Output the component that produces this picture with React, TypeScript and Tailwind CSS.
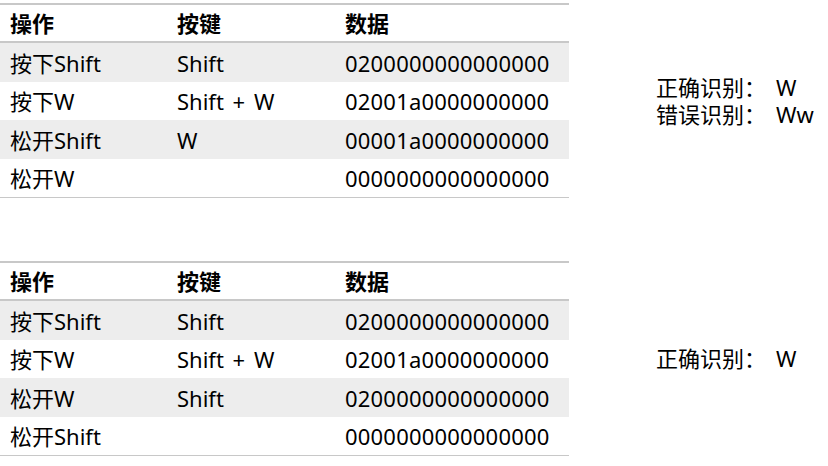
import React from "react";

type Row = [string, string, string];

const tableA: Row[] = [
  ["按下Shift", "Shift", "0200000000000000"],
  ["按下W", "Shift + W", "02001a0000000000"],
  ["松开Shift", "W", "00001a0000000000"],
  ["松开W", "", "0000000000000000"],
];

const tableB: Row[] = [
  ["按下Shift", "Shift", "0200000000000000"],
  ["按下W", "Shift + W", "02001a0000000000"],
  ["松开W", "Shift", "0200000000000000"],
  ["松开Shift", "", "0000000000000000"],
];

const KeyTable = ({ rows }: { rows: Row[] }) => {
  return (
    <div className="w-[569px] border-t-2 border-b border-[#c8c8c8]">
      {/* Header */}
      <div className="grid grid-cols-[167px_168px_234px] h-[38px] items-center border-b-2 border-[#c8c8c8] font-bold">
        <div className="pl-[10px]">操作</div>
        <div className="pl-[10px]">按键</div>
        <div className="pl-[10px]">数据</div>
      </div>
      {rows.map((r, i) => (
        <div
          key={i}
          className={`grid grid-cols-[167px_168px_234px] items-center ${
            i % 2 === 0 ? "bg-[#ededed] h-[39px]" : "bg-white h-[38px]"
          }`}
        >
          <div className="pl-[10px]">{r[0]}</div>
          <div className="pl-[10px] [word-spacing:3px]">{r[1]}</div>
          <div className="pl-[10px] tracking-[0.2px]">{r[2]}</div>
        </div>
      ))}
    </div>
  );
};

const Verdict = ({ label, value }: { label: string; value: string }) => (
  <div>
    {label}：<span className="ml-[10px]">{value}</span>
  </div>
);

export default function App() {
  return (
    <div
      className="w-[828px] h-[466px] bg-white text-black text-[22px] leading-none pt-[3px] flex flex-col gap-[63px]"
      style={{ fontFamily: '"Noto Sans", "Noto Sans CJK SC", sans-serif' }}
    >
      {/* First case */}
      <div className="flex items-center">
        <KeyTable rows={tableA} />
        <div className="ml-[87px] flex flex-col leading-[27px]">
          <Verdict label="正确识别" value="W" />
          <Verdict label="错误识别" value="Ww" />
        </div>
      </div>

      {/* Second case */}
      <div className="flex items-center">
        <KeyTable rows={tableB} />
        <div className="ml-[87px] leading-[27px]">
          <Verdict label="正确识别" value="W" />
        </div>
      </div>
    </div>
  );
}
